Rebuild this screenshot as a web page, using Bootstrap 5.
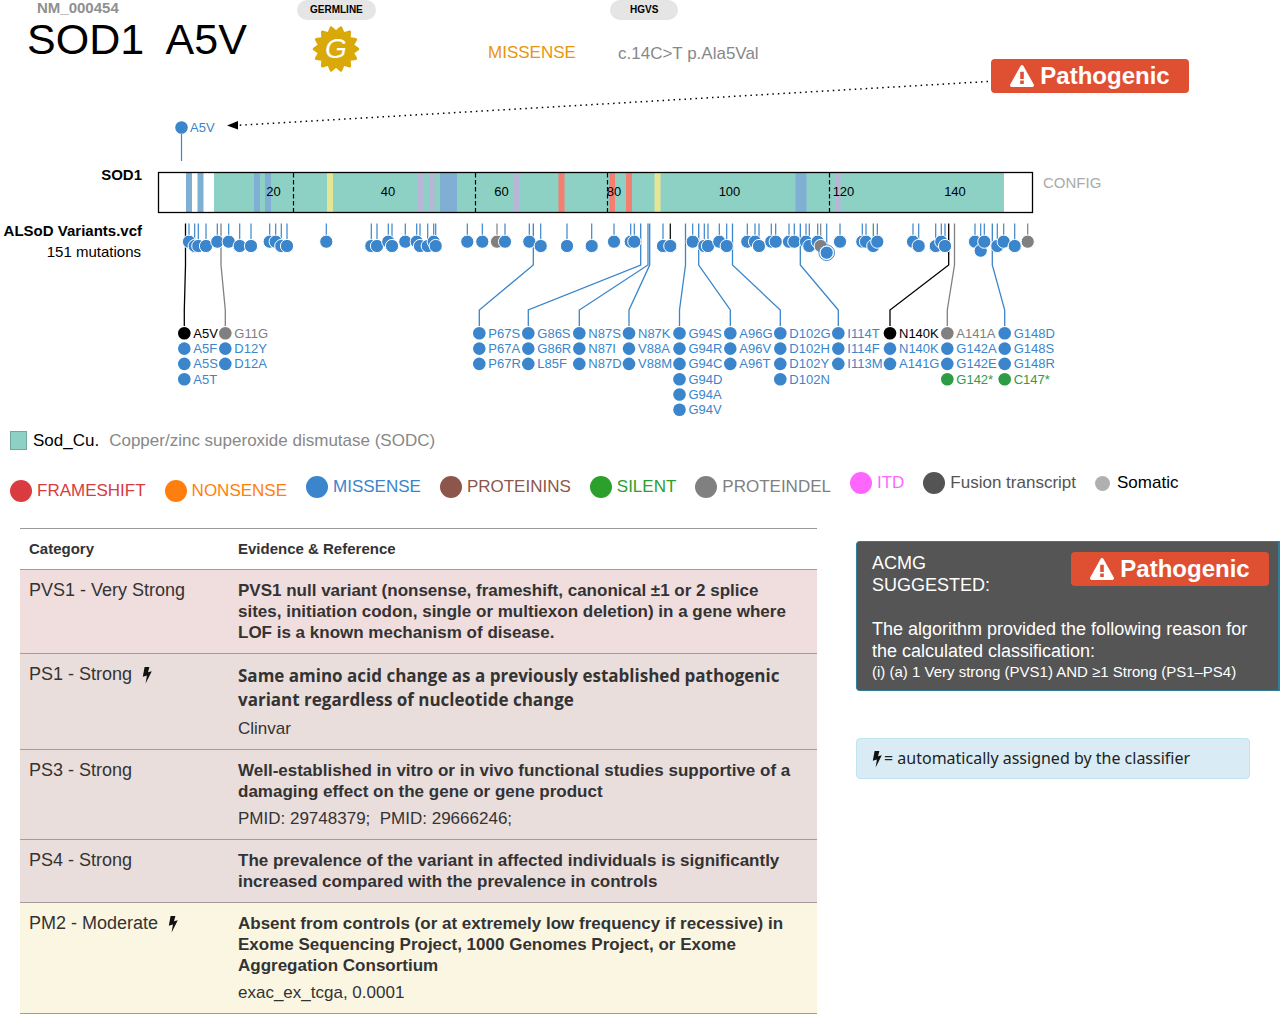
<!DOCTYPE html>
<html lang="en">
<head>
<meta charset="utf-8">
<meta name="viewport" content="width=device-width, initial-scale=1">
<title>SOD1 A5V</title>
<link href="https://cdn.jsdelivr.net/npm/bootstrap@5.3.0/dist/css/bootstrap.min.css" rel="stylesheet">
<style>
  body { font-family: "Liberation Sans", Arial, sans-serif; font-size: 17px; line-height: 21px; color: #333; background: #fff; }
  .variant-head { display: grid; grid-template-columns: 297fr 191fr 122fr 381fr 289fr; height: 93px; }
  .variant-id { padding-left: 27px; }
  .isoform { font-size: 15px; line-height: 16px; font-weight: 700; color: #909090; padding-left: 10px; }
  .variant-name { font-size: 43px; line-height: 46px; font-weight: 400; color: #000; }
  .tag { font-size: 10px; line-height: 20px; font-weight: 700; color: #000; background: #e5e5e5; border-radius: 10px; padding: 0 13px; }
  .tag-wide { padding: 0 20px; }
  .seal { margin: 4px 0 0 15px; }
  .head-value { line-height: 22px; margin-top: 42px; }
  .tag + .head-value { margin-top: 22px; }
  .c-missense-head { color: #e8960c; }
  .c-muted { color: #888; }
  .verdict { font-size: 24px; line-height: 34px; font-weight: 700; color: #fff; background: #df5033; border-radius: 4px; width: 198px; gap: 6px; }
  .plot text { font-family: "Liberation Sans", Arial, sans-serif; font-size: 13px; }
  .plot .track-label { font-size: 15px; text-anchor: end; }
  .plot .tick { text-anchor: middle; }
  .plot a { text-decoration: none; }
  .plot .config-link { font-size: 15px; fill: #aaa; }
  .swatch { width: 17px; height: 19px; background: #8dd1c5; border: 1px solid #74a89f; }
  .domain-key { padding-left: 10px; gap: 6px; margin-top: 10px; }
  .type-key { padding-left: 10px; height: 30px; margin-top: 21px; column-gap: 19px; line-height: 22px; }
  .type-key > span { display: flex; align-items: center; gap: 5px; white-space: nowrap; }
  .k-frameshift { color: #d93b40; }
  .k-nonsense { color: #ff7f0e; }
  .k-missense { color: #3a85cb; }
  .k-proteinins { color: #8c564b; }
  .k-silent { color: #2ca02c; }
  .k-proteindel { color: #808080; }
  .k-itd { color: #ff66ff; }
  .k-fusion { color: #545454; }
  .k-somatic { color: #b0b0b0; }
  .dot { width: 22px; height: 22px; border-radius: 50%; background: currentColor; }
  .dot-small { width: 15px; height: 15px; margin-right: 2px; }
  .report { display: grid; grid-template-columns: 797fr 424fr; column-gap: 39px; padding-left: 20px; margin-top: 26px; align-items: start; }
  .evidence { --bs-table-color: #333; --bs-table-bg: #fff; color: #333; border-top: 1px solid #999; margin: 0; }
  .evidence > :not(caption) > * > * { padding: 10px 14px 10px 9px; border-bottom: 1px solid #a39c9c; }
  .evidence th.colhead { font-size: 15px; line-height: 20px; }
  .evidence td.cat { font-size: 18px; width: 209px; }
  .evidence .row-very-strong { --bs-table-bg: #f0dddd; }
  .evidence .row-strong { --bs-table-bg: #eadedd; }
  .evidence .row-moderate { --bs-table-bg: #fbf6e2; }
  .claim { font-weight: 700; margin: 0; }
  .claim-wide { font-family: "Open Sans", sans-serif; line-height: 24px; }
  .source { margin: 6px 0 0; }
  .bolt { width: 10px; height: 18px; fill: #111; }
  .acmg { background: #555; color: #fff; border: 1px solid #2d8097; border-right-width: 2px; border-radius: 4px 0 0 4px; padding: 10px 9px 8px 15px; margin-top: 13px; font-size: 18px; line-height: 22px; }
  .acmg-top { margin-bottom: 22px; }
  .acmg .rule { font-size: 15px; line-height: 20px; }
  .note { background: #d9ecf5; border: 1px solid #bfe5ee; border-radius: 4px; color: #222; font-family: "Noto Sans", sans-serif; font-size: 16px; line-height: 21px; padding: 9px 15px; margin: 47px 30px 0 0; gap: 2px; }
</style>
<script src="https://cdn.jsdelivr.net/npm/bootstrap@5.3.0/dist/js/bootstrap.bundle.min.js"></script>
</head>
<body>
<svg class="d-none" aria-hidden="true">
  <symbol id="bolt" viewBox="0 0 10 18"><path d="M2.600 1H7.400L6 6.300 9.800 5.200 3.600 17.600 4.900 9.600 .8 10.700Z"/></symbol>
  <symbol id="warn" viewBox="0 0 24 22"><path fill="#fff" fill-rule="evenodd" d="M10.500.9a1.800 1.800 0 0 1 3 0L23.800 19.600a1.700 1.700 0 0 1-1.500 2.400H1.700A1.700 1.700 0 0 1 .2 19.600ZM10.200 6.800V14h3.600V6.800ZM10.200 15.500V18.900h3.600V15.500Z"/></symbol>
</svg>

<header class="variant-head">
  <div class="variant-id">
    <div class="isoform">NM_000454</div>
    <h1 class="variant-name m-0 text-nowrap">SOD1&nbsp; A5V</h1>
  </div>
  <div>
    <span class="tag d-inline-block align-top">GERMLINE</span>
    <svg class="seal d-block" width="48" height="48" viewBox="0 0 48 48" role="img" aria-label="Germline"><polygon id="seal" fill="#d9a90a" stroke="#d9a90a" stroke-width="3" stroke-linejoin="round"/><text x="24" y="33" text-anchor="middle" fill="#fff" font-family="Liberation Sans" font-style="italic" font-size="28">G</text></svg>
  </div>
  <div class="head-value c-missense-head">MISSENSE</div>
  <div>
    <span class="tag tag-wide d-inline-block align-top">HGVS</span>
    <div class="head-value c-muted ps-2">c.14C&gt;T p.Ala5Val</div>
  </div>
  <div class="verdict d-flex align-items-center justify-content-center align-self-end"><svg width="24" height="22"><use href="#warn"/></svg><span>Pathogenic</span></div>
</header>

<svg class="plot d-block w-100 overflow-visible" id="plot" viewBox="0 93 1280 327" role="img" aria-label="SOD1 protein variants">
  <path d="M988 81.500L238 125.300" stroke="#000" stroke-width="1.500" stroke-dasharray="1.500 4" fill="none"/>
  <path d="M227 125.500L238 121V129.500Z"/>
  <path d="M181.500 134V161" stroke="#3a85cb" stroke-width="1.200"/>
  <circle cx="181.500" cy="127.500" r="6.300" fill="#3a85cb"/>
  <text x="190" y="132" fill="#3a85cb">A5V</text>
  <text class="track-label" x="142" y="180" font-weight="700">SOD1</text>
  <text class="track-label" x="142" y="236" font-weight="700">ALSoD Variants.vcf</text>
  <text class="track-label" x="141" y="257">151 mutations</text>
  <a href="#"><text class="config-link" x="1043" y="188">CONFIG</text></a>
</svg>

<div class="domain-key d-flex align-items-center">
  <span class="swatch"></span><span class="text-black">Sod_Cu.</span><span class="c-muted ms-1">Copper/zinc superoxide dismutase (SODC)</span>
</div>
<div class="type-key d-flex">
  <span class="k-frameshift align-self-end"><i class="dot"></i>FRAMESHIFT</span>
  <span class="k-nonsense align-self-end"><i class="dot"></i>NONSENSE</span>
  <span class="k-missense align-self-center"><i class="dot"></i>MISSENSE</span>
  <span class="k-proteinins align-self-center"><i class="dot"></i>PROTEININS</span>
  <span class="k-silent align-self-center"><i class="dot"></i>SILENT</span>
  <span class="k-proteindel align-self-center"><i class="dot"></i>PROTEINDEL</span>
  <span class="k-itd align-self-start"><i class="dot"></i>ITD</span>
  <span class="k-fusion align-self-start"><i class="dot"></i>Fusion transcript</span>
  <span class="k-somatic align-self-start"><i class="dot dot-small"></i><b class="fw-normal text-black">Somatic</b></span>
</div>

<main class="report">
  <table class="table evidence">
    <thead><tr><th class="colhead">Category</th><th class="colhead">Evidence &amp; Reference</th></tr></thead>
    <tbody>
      <tr class="row-very-strong"><td class="cat">PVS1 - Very Strong</td><td><p class="claim">PVS1 null variant (nonsense, frameshift, canonical ±1 or 2 splice sites, initiation codon, single or multiexon deletion) in a gene where LOF is a known mechanism of disease.</p></td></tr>
      <tr class="row-strong"><td class="cat">PS1 - Strong&nbsp; <svg class="bolt"><use href="#bolt"/></svg></td><td><p class="claim claim-wide">Same amino acid change as a previously established pathogenic variant regardless of nucleotide change</p><p class="source">Clinvar</p></td></tr>
      <tr class="row-strong"><td class="cat">PS3 - Strong</td><td><p class="claim">Well-established in vitro or in vivo functional studies supportive of a damaging effect on the gene or gene product</p><p class="source">PMID: 29748379;&nbsp; PMID: 29666246;</p></td></tr>
      <tr class="row-strong"><td class="cat">PS4 - Strong</td><td><p class="claim">The prevalence of the variant in affected individuals is significantly increased compared with the prevalence in controls</p></td></tr>
      <tr class="row-moderate"><td class="cat">PM2 - Moderate&nbsp; <svg class="bolt"><use href="#bolt"/></svg></td><td><p class="claim">Absent from controls (or at extremely low frequency if recessive) in Exome Sequencing Project, 1000 Genomes Project, or Exome Aggregation Consortium</p><p class="source">exac_ex_tcga, 0.0001</p></td></tr>
    </tbody>
  </table>
  <aside>
    <section class="acmg">
      <div class="acmg-top d-flex justify-content-between align-items-start">
        <div>ACMG<br>SUGGESTED:</div>
        <div class="verdict d-flex align-items-center justify-content-center"><svg width="24" height="22"><use href="#warn"/></svg><span>Pathogenic</span></div>
      </div>
      <div>The algorithm provided the following reason for the calculated classification:</div>
      <div class="rule">(i) (a) 1 Very strong (PVS1) AND ≥1 Strong (PS1–PS4)</div>
    </section>
    <div class="note d-flex align-items-center"><svg class="bolt"><use href="#bolt"/></svg><span>= automatically assigned by the classifier</span></div>
  </aside>
</main>

<script>
const BLUE = '#3a85cb', GRAY = '#808080', BLACK = '#000', GREEN = '#2c9c45';
const plot = document.getElementById('plot');
function add(tag, attrs, text) {
  const el = document.createElementNS('http://www.w3.org/2000/svg', tag);
  for (const k in attrs) el.setAttribute(k, attrs[k]);
  if (text) el.textContent = text;
  plot.appendChild(el);
}

// protein bar: domain, feature bands, exon borders, residue scale
add('rect', {x: 214, y: 172, width: 790, height: 40, fill: '#8dd1c5'});
const bands = {
  '#7fb0d3': [[186, 6], [197.5, 6], [254, 6], [265, 6], [440, 17], [795.5, 11]],
  '#e6e596': [[327, 6], [654.5, 6]],
  '#b9b5d8': [[418, 5.5], [429, 5.5], [513.5, 5.5], [835, 5.5]],
  '#f47f70': [[558.5, 6], [609.5, 5.5], [626, 6]]
};
for (const fill in bands) for (const [x, width] of bands[fill]) add('rect', {x, y: 172, width, height: 40, fill});
for (const x of [293.5, 475.5, 607.5, 829.5]) add('path', {d: `M${x} 173V212`, stroke: BLACK, 'stroke-width': 1.2, 'stroke-dasharray': '4.5 2.5'});
add('rect', {x: 158.5, y: 172.5, width: 874, height: 40, fill: 'none', stroke: BLACK, 'stroke-width': 1.3});
[273.5, 388, 501.5, 614, 729.5, 843.5, 955].forEach((x, i) => add('text', {class: 'tick', x, y: 196}, String(20 * (i + 1))));

// stacked variants: stem x, column x, stem colour, labels
const groups = [
  [185.5, 184.3, BLACK, 'A5V A5F A5S A5T'], [221, 225.3, GRAY, 'G11G D12Y D12A'],
  [533.3, 479.3, BLUE, 'P67S P67A P67R'], [640.7, 528.3, BLUE, 'G86S G86R L85F'],
  [648, 579.3, BLUE, 'N87S N87I N87D'], [649.7, 629, BLUE, 'N87K V88A V88M'],
  [685.5, 679.5, BLUE, 'G94S G94R G94C G94D G94A G94V'], [698.7, 730.3, BLUE, 'A96G A96V A96T'],
  [732.5, 780.3, BLUE, 'D102G D102H D102Y D102N'], [800.3, 838.3, BLUE, 'I114T I114F I113M'],
  [948.7, 890, BLACK, 'N140K N140K A141G'], [954.5, 947.3, GRAY, 'A141A G142A G142E G142*'],
  [992.3, 1004.7, BLUE, 'G148D G148S G148R C147*']
];
for (const [sx, cx, stroke] of groups)
  add('path', {d: `M${sx} 223.5V265L${cx} 310V326`, stroke, 'stroke-width': 1.3, fill: 'none'});

// single variants: x, level of the dot, colour, stem colour
const L = [241.7, 246, 250.7, 252.7];
const singles = [[189,0],[194.7,1],[198.3,1],[206,1],[217.3,0],[228.7,0],[239.7,1],[251,1],[269.7,0],[275.7,0],[281.3,1],[287,1],[326.3,0],
  [371.3,1],[377,1],[388.3,0],[392,1],[405.3,0],[416.7,0],[420,1],[427.7,1],[433.7,0],[435.7,1],[467.3,0],[482.3,0],[497,0,GRAY],[505,0],
  [529.3,0],[540.7,1],[567,1],[591.7,1],[614,0],[630.7,0],[634.3,0],[663,1],[670.3,1,BLUE,BLACK],[692.7,0],[704.3,1],[708,1],[719.3,0],[726.7,1],
  [747.3,0],[755,0],[759,1],[771.3,0],[775.7,0],[789,0],[794.3,0],[806,0],[809.3,1],[817.7,0],[820.7,1,GRAY],[826.7,3],[840,0],
  [862.3,0],[866,0],[873.3,1,BLUE,GREEN],[877.3,0],[913,0],[918.7,1],[935.7,1],[941.3,0],[945,1],[975,0],[980.7,2],[984.3,0],[997.3,1],[1003.7,0],[1014.7,1],[1027.7,0,GRAY]];
for (const [x, lv, fill = BLUE, stem = fill] of singles) {
  add('path', {d: `M${x} 223.5V${L[lv]}`, stroke: stem, 'stroke-width': 1.2});
}
for (const [x, lv, fill = BLUE] of singles) {
  if (lv === 3) add('circle', {cx: x, cy: L[lv], r: 7.8, fill: '#fff', stroke: BLUE});
  add('circle', {cx: x, cy: L[lv], r: 6.6, fill, stroke: '#fff', 'stroke-width': 1});
}
for (const [, cx, first, names] of groups) names.split(' ').forEach((name, i) => {
  const fill = name.endsWith('*') ? GREEN : i === 0 ? first : BLUE;
  const y = 333.3 + i * 15.3;
  add('circle', {cx, cy: y, r: 6.3, fill});
  add('text', {x: cx + 9, y: y + 4.3, fill}, name);
});

// toothed seal behind the germline letter
const TEETH = 14, pts = [];
for (let i = 0; i < TEETH; i++) {
  for (const [r, off] of [[21.8, 0.5], [16.8, 1]]) {
    const a = (i + off) * 2 * Math.PI / TEETH;
    pts.push((24 + r * Math.sin(a)).toFixed(2) + ',' + (24 - r * Math.cos(a)).toFixed(2));
  }
}
document.getElementById('seal').setAttribute('points', pts.join(' '));
</script>
</body>
</html>
